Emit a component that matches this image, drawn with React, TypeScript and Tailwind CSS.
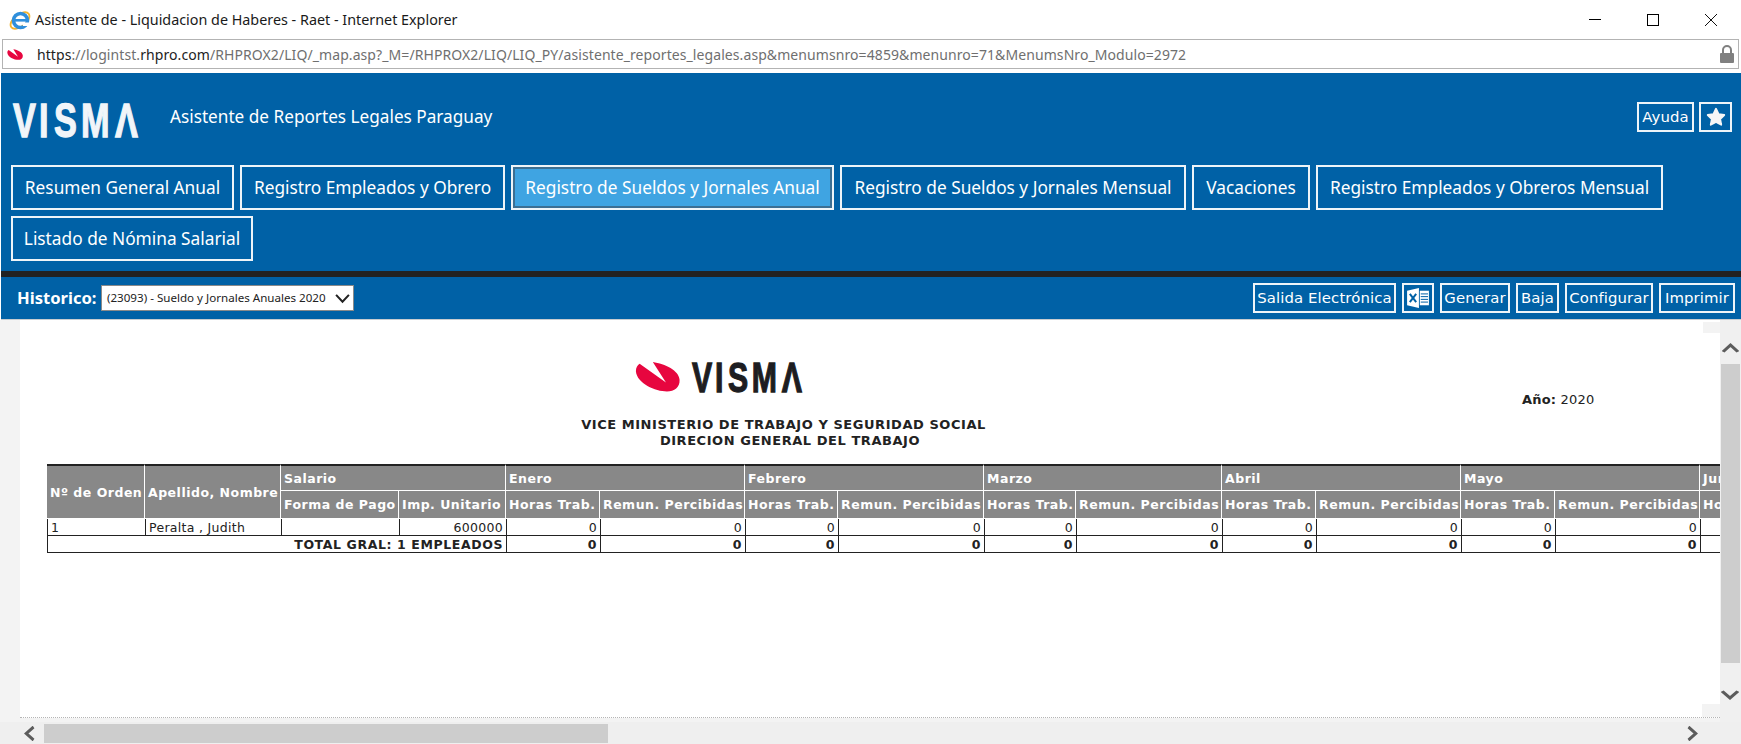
import React from "react";

const MENU = [
  { t: "Resumen General Anual", w: "w-[223px]" },
  { t: "Registro Empleados y Obrero", w: "w-[265px]" },
  { t: "Registro de Sueldos y Jornales Anual", w: "w-[323px]" },
  { t: "Registro de Sueldos y Jornales Mensual", w: "w-[346px]" },
  { t: "Vacaciones", w: "w-[118px]" },
  { t: "Registro Empleados y Obreros Mensual", w: "w-[347px] mr-[60px]" },
  { t: "Listado de Nómina Salarial", w: "w-[242px]" },
];
const MONTHS = ["Enero", "Febrero", "Marzo", "Abril", "Mayo", "Junio"];
const COLS = [98, 136, 118, 107];
const MCOLS = [94, 145, 93, 146, 92, 146, 94, 145, 94, 145, 94, 145];
const LOGO_X = [0, 26, 41, 68, 102];

const RedMark = ({ className }: { className: string }) => (
  <svg viewBox="8 10 48 33" className={className}>
    <path fill="#e7063f" d="M13 13 L41 33 L27 11 C40 13 55 20 55.5 30 C56 38 50 42.5 42 42.5 C30 42.5 10 34 9 21 C9 17 10.5 14.5 13 13 Z" />
  </svg>
);

const Logo = ({ fill, w, h, size }: { fill: string; w: number; h: number; size: number }) => {
  const sx = 0.7 * (w / 126) / (size / 49);
  const xs = LOGO_X.map(v => ((v * w) / 126 / sx).toFixed(1)).join(" ");
  return (
    <svg width={w} height={h} viewBox={`0 0 ${w} ${h}`} className="block overflow-visible">
      <text transform={`scale(${sx} 1)`} x={xs} y={h} fill={fill} stroke={fill} strokeWidth="1.3" fontFamily="Liberation Sans" fontWeight="700" fontSize={size}>VISMΛ</text>
    </svg>
  );
};

const IEIcon = () => (
  <svg viewBox="0 0 24 24" className="w-[24px] h-[24px] shrink-0">
    <ellipse cx="12" cy="12.5" rx="11" ry="6" transform="rotate(-38 12 12.5)" fill="none" stroke="#f2b32e" strokeWidth="1.8" />
    <circle cx="12.5" cy="12.5" r="7" fill="none" stroke="#2f8fdc" strokeWidth="3.6" />
    <rect x="7" y="11" width="11" height="2.6" fill="#2f8fdc" />
    <rect x="15" y="14.5" width="6" height="3.5" fill="#fff" />
  </svg>
);

const Chevron = ({ d, className }: { d: string; className: string }) => (
  <svg viewBox="0 0 16 16" preserveAspectRatio="none" className={className}>
    <path d={d} fill="none" stroke="#5c5c5c" strokeWidth="3.4" />
  </svg>
);

const Btn = ({ children, className = "" }: { children: React.ReactNode; className?: string }) => (
  <div className={`h-[30px] flex items-center justify-center border-2 border-[#eef4f8] text-white text-[14.9px] tracking-[0.1px] font-['DejaVu_Sans',sans-serif] whitespace-nowrap ${className}`}>{children}</div>
);

const ExcelIcon = () => (
  <svg viewBox="0 0 24 22" className="w-[22px] h-[20px]">
    <path fill="#fff" d="M0 3 L13 0 V22 L0 19 Z" />
    <path fill="#fff" d="M14 3 H24 V19 H14 Z" />
    <path stroke="#0061a6" strokeWidth="1.1" d="M15 6.5 H23 M15 9.5 H23 M15 12.5 H23 M15 15.5 H23" />
    <path stroke="#0061a6" strokeWidth="2.2" fill="none" d="M3 6.5 L10 15.5 M10 6.5 L3 15.5" />
  </svg>
);

export default function App() {
  return (
    <div className="w-[1741px] h-[744px] overflow-hidden flex flex-col bg-white font-['Noto_Sans',sans-serif]">
      {/* title bar */}
      <div className="h-[39px] shrink-0 flex items-center pl-[8px] pr-[24px] text-[#1a1a1a]">
        <IEIcon />
        <span className="ml-[3px] text-[14.35px]">Asistente de - Liquidacion de Haberes - Raet - Internet Explorer</span>
        <div className="ml-auto flex items-center gap-[46px]">
          <div className="w-[12px] h-px bg-black" />
          <div className="w-[12px] h-[12px] border border-black" />
          <svg viewBox="0 0 12 12" className="w-[12px] h-[12px]"><path d="M0 0 L12 12 M12 0 L0 12" stroke="#111" strokeWidth="1" /></svg>
        </div>
      </div>
      {/* address bar */}
      <div className="h-[30px] shrink-0 mx-[2px] border border-[#b3b3b3] flex items-center pl-[4px] pr-[4px] text-[14px] text-[#6f6f6f]">
        <RedMark className="w-[16px] h-[11px]" />
        <span className="ml-[14px] tracking-[0.08px] whitespace-nowrap"><span className="text-[#222]">https</span>://logintst.<span className="text-[#222]">rhpro.com</span>/RHPROX2/LIQ/_map.asp?_M=/RHPROX2/LIQ/LIQ_PY/asistente_reportes_legales.asp&amp;menumsnro=4859&amp;menunro=71&amp;MenumsNro_Modulo=2972</span>
        <svg viewBox="0 0 14 18" className="ml-auto w-[14px] h-[18px]">
          <path d="M3 8 V5 a4 4 0 0 1 8 0 V8" fill="none" stroke="#808080" strokeWidth="2" />
          <rect x="0" y="8" width="14" height="10" rx="1" fill="#808080" />
        </svg>
      </div>
      <div className="h-[4px] shrink-0" />
      {/* blue header */}
      <div className="h-[198px] shrink-0 ml-px bg-[#0061a6] flex flex-col">
        <div className="h-[92px] shrink-0 flex items-center pl-[12px] pr-[9px] pb-[4px]">
          <div className="mt-[4px]"><Logo fill="#f1f5f9" w={126} h={36} size={49} /></div>
          <span className="ml-[31px] text-white text-[17.2px]">Asistente de Reportes Legales Paraguay</span>
          <div className="ml-auto flex gap-[5px]">
            <Btn className="w-[57px]">Ayuda</Btn>
            <Btn className="w-[33px]">
              <svg viewBox="0 0 24 24" className="w-[22px] h-[22px]"><path fill="#f6f6f6" stroke="#f6f6f6" strokeWidth="2" strokeLinejoin="round" d="M12 3 L14.8 9 L21 9.8 L16.5 14.2 L17.7 20.5 L12 17.4 L6.3 20.5 L7.5 14.2 L3 9.8 L9.2 9 Z" /></svg>
            </Btn>
          </div>
        </div>
        <div className="flex flex-wrap gap-y-[6px] gap-x-[6px] pl-[10px] content-start">
          {MENU.map((m, i) => (
            <div key={m.t} className={`h-[45px] flex items-center justify-center border-2 border-[#eef4f8] text-white text-[17.3px] whitespace-nowrap ${m.w} ${i === 2 ? "bg-[#3fa4e2] shadow-[inset_0_0_0_2px_#3b6f93]" : ""}`}>{m.t}</div>
          ))}
        </div>
      </div>
      <div className="h-[6px] shrink-0 ml-px bg-[#222]" />
      <div className="h-[43px] shrink-0 ml-px bg-[#0061a6] border-b border-[#c8ccd0] flex items-center pl-[16px] pr-[6px]">
        <span className="w-[80px] text-white text-[16.6px] font-bold">Historico:</span>
        <div className="ml-[4px] w-[253px] h-[26px] bg-white border border-[#8a8a8a] flex items-center pl-[5px] pr-[3px] text-[11.6px] text-[#222]">
          <span className="whitespace-nowrap">(23093) - Sueldo y Jornales Anuales 2020</span>
          <svg viewBox="0 0 16 12" className="ml-auto w-[15px] h-[11px]"><path d="M1 2 L8 9.5 L15 2" fill="none" stroke="#222" strokeWidth="2.2" /></svg>
        </div>
        <div className="ml-auto flex gap-[6px]">
          <Btn className="w-[143px]">Salida Electrónica</Btn>
          <Btn className="w-[32px]"><ExcelIcon /></Btn>
          <Btn className="w-[70px]">Generar</Btn>
          <Btn className="w-[43px]">Baja</Btn>
          <Btn className="w-[88px]">Configurar</Btn>
          <Btn className="w-[76px]">Imprimir</Btn>
        </div>
      </div>
      {/* content */}
      <div className="flex-1 min-h-0 flex">
        <div className="w-[20px] shrink-0 bg-[#f3f3f3]" />
        <div className="flex-1 min-w-0 flex flex-col">
          <div className="relative flex-1 min-h-0 bg-white overflow-hidden border-b border-dotted border-[#b5b5b5] font-['DejaVu_Sans',sans-serif] text-[#222]">
            <div className="absolute right-0 top-[2px] w-[17px] h-[11px] bg-[#f3f3f3]" />
            <div className="absolute right-0 bottom-0 w-[18px] h-[13px] bg-[#f3f3f3]" />
            <div className="flex pt-[41px] h-[72px]">
              <div className="ml-[614px] flex items-center">
                <RedMark className="w-[47px] h-[31px]" />
                <div className="ml-[11px]"><Logo fill="#1d1d21" w={111} h={31} size={43} /></div>
              </div>
              <div className="ml-[719px] mt-[31px] text-[13px] tracking-[0.2px] whitespace-nowrap h-[16px] leading-[16px]"><b>Año:</b> 2020</div>
            </div>
            <div className="mt-[25px] w-[405px] ml-[561px] text-center text-[13px] tracking-[0.55px] font-bold leading-[16px] whitespace-nowrap">
              <div>VICE MINISTERIO DE TRABAJO Y SEGURIDAD SOCIAL</div>
              <div className="pl-[13px]">DIRECION GENERAL DEL TRABAJO</div>
            </div>
            <div className="ml-[27px] mt-[15px] w-[1800px] overflow-hidden">
              <table className="table-fixed border-separate border-spacing-0 w-[1852px] text-[12.5px] tracking-[0.3px] leading-none">
                <colgroup>
                  {[...COLS, ...MCOLS].map((w, i) => <col key={i} style={{ width: w }} />)}
                </colgroup>
                <thead className="text-white font-bold tracking-[0.5px]">
                  <tr className="h-[27px]">
                    <th rowSpan={2} className="bg-[#888] border-t-2 border-t-[#222] border-r border-r-white border-b border-b-white text-left pl-[3px] pt-[2px] whitespace-nowrap">Nº de Orden</th>
                    <th rowSpan={2} className="bg-[#888] border-t-2 border-t-[#222] border-r border-r-white border-b border-b-white text-left pl-[3px] pt-[2px] whitespace-nowrap">Apellido, Nombre</th>
                    <th colSpan={2} className="bg-[#888] border-t-2 border-t-[#222] border-r border-r-white border-b border-b-white text-left pl-[3px] pt-[2px]">Salario</th>
                    {MONTHS.map(m => <th key={m} colSpan={2} className="bg-[#888] border-t-2 border-t-[#222] border-r border-r-white border-b border-b-white text-left pl-[3px] pt-[2px]">{m}</th>)}
                  </tr>
                  <tr className="h-[28px]">
                    <th className="bg-[#888] border-r border-r-white border-b border-b-white text-left pl-[3px] pt-[2px] whitespace-nowrap">Forma de Pago</th>
                    <th className="bg-[#888] border-r border-r-white border-b border-b-white text-left pl-[3px] pt-[2px] whitespace-nowrap">Imp. Unitario</th>
                    {MONTHS.flatMap(m => [
                      <th key={m + "h"} className="bg-[#888] border-r border-r-white border-b border-b-white text-left pl-[3px] pt-[2px] whitespace-nowrap">Horas Trab.</th>,
                      <th key={m + "r"} className="bg-[#888] border-r border-r-white border-b border-b-white text-left pl-[3px] pt-[2px] whitespace-nowrap">Remun. Percibidas</th>,
                    ])}
                  </tr>
                </thead>
                <tbody>
                  <tr className="h-[17px]">
                    <td className="border-l border-l-[#222] border-b border-b-[#222] pl-[3px] pt-[2px]">1</td>
                    <td className="border-l border-l-[#222] border-b border-b-[#222] pl-[3px] pt-[2px] whitespace-nowrap">Peralta , Judith</td>
                    <td className="border-l border-l-[#222] border-b border-b-[#222]"></td>
                    <td className="border-l border-l-[#222] border-b border-b-[#222] text-right pr-[3px] pt-[2px]">600000</td>
                    {MCOLS.map((_, i) => <td key={i} className="border-l border-l-[#222] border-b border-b-[#222] text-right pr-[3px] pt-[2px]">0</td>)}
                  </tr>
                  <tr className="h-[17px] font-bold tracking-[0.6px]">
                    <td colSpan={4} className="border-l border-l-[#222] border-b border-b-[#222] text-right pr-[3px] pt-[2px] whitespace-nowrap">TOTAL GRAL: 1 EMPLEADOS</td>
                    {MCOLS.map((_, i) => <td key={i} className="border-l border-l-[#222] border-b border-b-[#222] text-right pr-[3px] pt-[2px]">0</td>)}
                  </tr>
                </tbody>
              </table>
            </div>
          </div>
          <div className="h-[4px] shrink-0 bg-[#f3f3f3]" />
        </div>
        <div className="w-[21px] shrink-0 bg-[#f0f0f0] flex flex-col pl-px pr-px">
          <div className="h-[44px] shrink-0 flex items-center justify-center pt-[12px]">
            <Chevron d="M1 13 L8 4 L15 13" className="w-[17px] h-[12px]" />
          </div>
          <div className="h-[299px] shrink-0 bg-[#cdcdcd]" />
          <div className="h-[26px] shrink-0" />
          <Chevron d="M1 3 L8 12 L15 3" className="w-[18px] h-[12px] shrink-0" />
        </div>
      </div>
      {/* horizontal scrollbar */}
      <div className="h-[22px] shrink-0 bg-[#efefef] flex items-center">
        <div className="w-[44px] shrink-0 flex justify-end pr-[8px]">
          <Chevron d="M13 1 L4 8 L13 15" className="w-[13px] h-[15px]" />
        </div>
        <div className="w-[564px] h-[19px] bg-[#cdcdcd]" />
        <div className="ml-auto mr-[42px]">
          <Chevron d="M3 1 L12 8 L3 15" className="w-[13px] h-[15px]" />
        </div>
      </div>
    </div>
  );
}
